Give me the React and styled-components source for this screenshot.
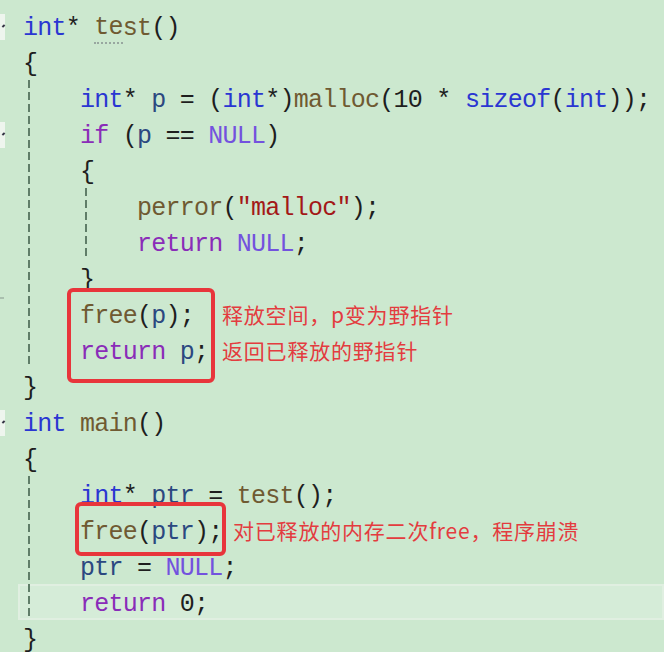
import React from "react";
import styled, { createGlobalStyle } from "styled-components";

var BG = "#cce8cf";
var CHAR = 14.25;
var TAB = CHAR * 4;

var COLOR = {
	kw: "#2a36d2",
	ctl: "#8a2cb8",
	mac: "#7352de",
	fn: "#6f5a32",
	v: "#2b4880",
	str: "#a31818",
	p: "#1e1e1e",
};

var Global = createGlobalStyle`
	html, body {
		margin: 0;
		padding: 0;
		background: ${BG};
		overflow: hidden;
	}
`;

var Editor = styled.div`
	position: relative;
	width: 664px;
	height: 652px;
	padding-top: 8px;
	box-sizing: border-box;
	background: ${BG};
	display: flex;
	flex-direction: column;
`;

var Row = styled.div`
	position: relative;
	display: flex;
	height: 36px;
	flex: none;
`;

var Gutter = styled.div`
	width: 18px;
	flex: none;
	position: relative;
`;

var Fold = styled.div`
	width: 5px;
	height: 26px;
	margin-top: 6px;
	background: #eef5ee;
	position: relative;
	&::after {
		content: "";
		position: absolute;
		right: 0;
		top: 11px;
		width: 3px;
		height: 2px;
		background: #334;
		transform: rotate(-40deg);
	}
`;

var Tick = styled.div`
	position: absolute;
	left: 0;
	bottom: -3px;
	width: 4px;
	height: 2px;
	background: #a9bfae;
`;

var Body = styled.div`
	flex: 1;
	display: flex;
	align-items: stretch;
	padding-left: 5px;
	background: ${(p) => (p.$current ? "#d5ecd8" : "transparent")};
	box-shadow: ${(p) => (p.$current ? "inset 0 0 0 2px #e0efe1" : "none")};
`;

var Indent = styled.div`
	width: ${TAB}px;
	flex: none;
	background: ${(p) =>
		p.$guide
			? "repeating-linear-gradient(to bottom, #5f7d68 0 8px, transparent 8px 12px) 5px 0 / 2px 100% no-repeat"
			: "none"};
`;

var Code = styled.div`
	display: flex;
	align-items: center;
	padding-top: 5px;
	white-space: pre;
	font-family: "Liberation Mono", "DejaVu Sans Mono", monospace;
	font-size: 25px;
	letter-spacing: ${CHAR - 15}px;
	color: ${COLOR.p};
`;

var Tok = styled.span`
	color: ${(p) => COLOR[p.$t]};
	${(p) => (p.$dot ? "border-bottom: 2px dotted #98a7a0;" : "")}
`;

var Note = styled.div`
	position: absolute;
	left: ${(p) => p.$left}px;
	top: 0;
	height: 36px;
	display: flex;
	align-items: center;
	font-family: "Noto Sans CJK SC", "Noto Sans", sans-serif;
	font-size: 21px;
	letter-spacing: 0.8px;
	color: #e33c3f;
	white-space: nowrap;
`;

var Frame = styled.div`
	position: absolute;
	left: ${(p) => p.$x}px;
	top: ${(p) => p.$y}px;
	width: ${(p) => p.$w}px;
	height: ${(p) => p.$h}px;
	border: 4px solid #e8353b;
	border-radius: 6px;
	box-sizing: border-box;
	pointer-events: none;
`;

var LINES = [
	{ fold: true, toks: [["kw", "int"], ["p", "* "], ["fn", "te", true], ["fn", "st"], ["p", "()"]] },
	{ toks: [["p", "{"]] },
	{
		ind: [1],
		toks: [
			["kw", "int"], ["p", "* "], ["v", "p"], ["p", " = ("], ["kw", "int"], ["p", "*)"],
			["fn", "malloc"], ["p", "(10 * "], ["kw", "sizeof"], ["p", "("], ["kw", "int"], ["p", "));"],
		],
	},
	{ fold: true, ind: [1], toks: [["ctl", "if"], ["p", " ("], ["v", "p"], ["p", " == "], ["mac", "NULL"], ["p", ")"]] },
	{ ind: [1], toks: [["p", "{"]] },
	{ ind: [1, 1], toks: [["fn", "perror"], ["p", "("], ["str", "\"malloc\""], ["p", ");"]] },
	{ ind: [1, 1], toks: [["ctl", "return"], ["p", " "], ["mac", "NULL"], ["p", ";"]] },
	{ ind: [1], tick: true, toks: [["p", "}"]] },
	{ ind: [1], note: ["释放空间，p变为野指针", 222], toks: [["fn", "free"], ["p", "("], ["v", "p"], ["p", ");"]] },
	{ ind: [1], note: ["返回已释放的野指针", 222], toks: [["ctl", "return"], ["p", " "], ["v", "p"], ["p", ";"]] },
	{ toks: [["p", "}"]] },
	{ fold: true, toks: [["kw", "int"], ["p", " "], ["fn", "main"], ["p", "()"]] },
	{ toks: [["p", "{"]] },
	{ ind: [1], toks: [["kw", "int"], ["p", "* "], ["v", "ptr"], ["p", " = "], ["fn", "test"], ["p", "();"]] },
	{ ind: [1], note: ["对已释放的内存二次free，程序崩溃", 233], toks: [["fn", "free"], ["p", "("], ["v", "ptr"], ["p", ");"]] },
	{ ind: [1], toks: [["v", "ptr"], ["p", " = "], ["mac", "NULL"], ["p", ";"]] },
	{ ind: [1], current: true, toks: [["ctl", "return"], ["p", " 0;"]] },
	{ toks: [["p", "}"]] },
];

function Line({ fold, tick, ind = [], toks, note, current }) {
	return (
		<Row>
			<Gutter>
				{fold && <Fold />}
				{tick && <Tick />}
			</Gutter>
			<Body $current={current}>
				{ind.map((g, i) => (
					<Indent key={i} $guide={!!g} />
				))}
				<Code>
					{toks.map(([t, s, dot], i) => (
						<Tok key={i} $t={t} $dot={dot}>
							{s}
						</Tok>
					))}
				</Code>
			</Body>
			{note && <Note $left={note[1]}>{note[0]}</Note>}
		</Row>
	);
}

export default function App() {
	return (
		<>
			<Global />
			<Editor>
				{LINES.map((l, i) => (
					<Line key={i} {...l} />
				))}
				<Frame $x={67} $y={288} $w={148} $h={95} />
				<Frame $x={75} $y={502} $w={151} $h={54} />
			</Editor>
		</>
	);
}
